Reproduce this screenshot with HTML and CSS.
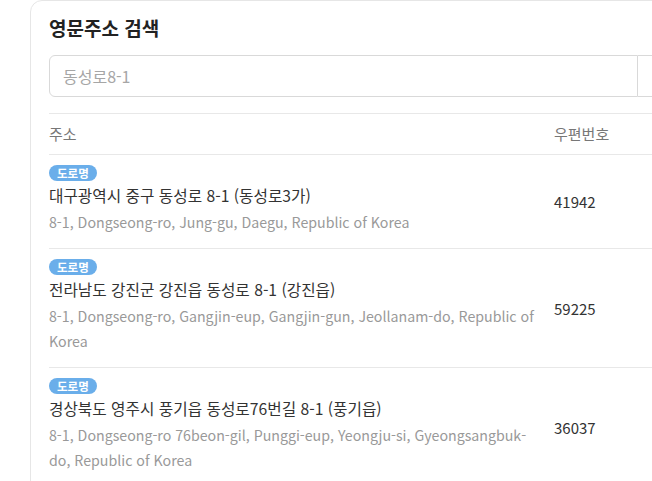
FILE: index.html
```html
<!DOCTYPE html>
<html lang="ko">
<head>
  <meta charset="UTF-8" />
  <meta name="viewport" content="width=device-width, initial-scale=1.0"/>
  <title>영문주소 검색</title>
  <link rel="stylesheet" href="styles.css">
</head>
<body>

<div class="card">
  <h2 class="card-title">영문주소 검색</h2>

  <!-- Search box -->
  <div class="search">
    <input type="text" class="search-input" placeholder="동성로8-1">
    <button class="search-btn">검색</button>
  </div>

  <!-- Results -->
  <div class="results">
    <div class="row head">
      <div class="cell">주소</div>
      <div class="cell">우편번호</div>
    </div>

    <div class="row">
      <div class="cell addr">
        <span class="badge">도로명</span>
        <div class="addr-ko">대구광역시 중구 동성로 8-1 (동성로3가)</div>
        <div class="addr-en">8-1, Dongseong-ro, Jung-gu, Daegu, Republic of Korea</div>
      </div>
      <div class="cell zip">41942</div>
    </div>

    <div class="row">
      <div class="cell addr">
        <span class="badge">도로명</span>
        <div class="addr-ko">전라남도 강진군 강진읍 동성로 8-1 (강진읍)</div>
        <div class="addr-en">8-1, Dongseong-ro, Gangjin-eup, Gangjin-gun, Jeollanam-do, Republic of Korea</div>
      </div>
      <div class="cell zip">59225</div>
    </div>

    <div class="row">
      <div class="cell addr">
        <span class="badge">도로명</span>
        <div class="addr-ko">경상북도 영주시 풍기읍 동성로76번길 8-1 (풍기읍)</div>
        <div class="addr-en">8-1, Dongseong-ro 76beon-gil, Punggi-eup, Yeongju-si, Gyeongsangbuk-do, Republic of Korea</div>
      </div>
      <div class="cell zip">36037</div>
    </div>
  </div>
</div>

</body>
</html>
```

FILE: styles.css
```css
body {
  margin: 0;
  background: #fff;
  color: #333;
  font-family: "Noto Sans CJK KR", sans-serif;
  overflow: hidden;
}

.card {
  width: 720px;
  margin-left: 30px;
  padding: 15px 18px 20px;
  border: 1px solid #e6e6e6;
  border-radius: 12px;
  background: #fff;
}

.card-title {
  margin: 0;
  font-size: 19px;
  line-height: 24px;
  font-weight: 700;
  color: #222;
}

.search {
  display: flex;
  margin-top: 15px;
  height: 42px;
}

.search-input {
  width: 589px;
  box-sizing: border-box;
  border: 1px solid #d9d9d9;
  border-radius: 6px 0 0 6px;
  padding: 0 13px;
  font-family: inherit;
  font-size: 16px;
  color: #333;
  outline: none;
}

.search-input::placeholder {
  color: #a6a6a6;
}

.search-btn {
  border: 1px solid #d9d9d9;
  border-left: none;
  border-radius: 0 6px 6px 0;
  background: #fff;
  padding: 0 24px;
  font-family: inherit;
  font-size: 15px;
  color: #333;
}

.results {
  margin-top: 16px;
  border-top: 1px solid #e8e8e8;
}

.row {
  display: grid;
  grid-template-columns: 505px 1fr;
  border-bottom: 1px solid #e8e8e8;
}

.row.head .cell {
  height: 40px;
  line-height: 40px;
  font-size: 15px;
  color: #777;
}

.cell {
  padding-right: 15px;
}

.addr {
  padding-top: 10px;
  padding-bottom: 13px;
  line-height: 16px;
}

.badge {
  display: block;
  width: fit-content;
  height: 16px;
  line-height: 16px;
  padding: 0 8px;
  border-radius: 8px;
  background: #6aaeea;
  color: #fff;
  font-size: 11.5px;
  font-weight: 700;
}

.addr-ko {
  margin-top: 2px;
  font-size: 15.7px;
  line-height: 26px;
  color: #333;
}

.addr-en {
  margin-top: 1px;
  font-size: 14.2px;
  line-height: 25px;
  color: #999;
}

.zip {
  align-self: center;
  font-size: 15px;
  color: #333;
}
```
